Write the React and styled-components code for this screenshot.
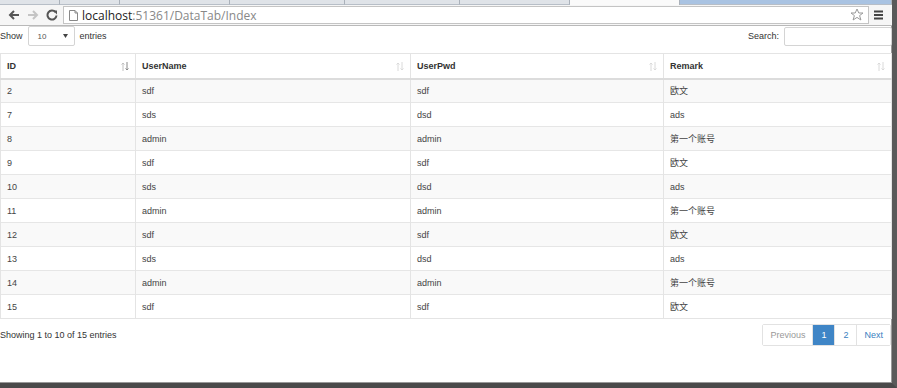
import React from "react";
import styled, { createGlobalStyle } from "styled-components";

const rows = [
  ["2", "sdf", "sdf", "欧文"],
  ["7", "sds", "dsd", "ads"],
  ["8", "admin", "admin", "第一个账号"],
  ["9", "sdf", "sdf", "欧文"],
  ["10", "sds", "dsd", "ads"],
  ["11", "admin", "admin", "第一个账号"],
  ["12", "sdf", "sdf", "欧文"],
  ["13", "sds", "dsd", "ads"],
  ["14", "admin", "admin", "第一个账号"],
  ["15", "sdf", "sdf", "欧文"],
];

const columns = [
  { title: "ID", width: 135, active: true },
  { title: "UserName", width: 275 },
  { title: "UserPwd", width: 253 },
  { title: "Remark", width: 228 },
];

const GlobalStyle = createGlobalStyle`
  html, body { margin: 0; padding: 0; background: #fff; }
  body {
    font-family: "Liberation Sans", Arial, "Noto Sans CJK SC", sans-serif;
    color: #333;
  }
  * { box-sizing: border-box; }
`;

const Frame = styled.div`
  width: 897px;
  height: 388px;
  display: flex;
  flex-direction: column;
  border-right: 5px solid #5a5a5a;
  border-bottom: 5px solid #4a4a4a;
  box-shadow: inset -1px -1px 0 #999;
  overflow: hidden;
`;

const TabStrip = styled.div`
  height: 5px;
  display: flex;
  background: #d3d8de;
`;

const Tab = styled.div`
  width: ${(p) => p.$w}px;
  background: ${(p) => (p.$active ? "#fafafa" : p.$blue ? "#a9c3e2" : "#dfe3e8")};
  border-right: 1px solid #aab1ba;
  border-bottom: ${(p) => (p.$active ? "none" : "1px solid #b7bec7")};
`;

const Toolbar = styled.div`
  height: 21px;
  display: flex;
  align-items: center;
  padding: 0 4px 0 4px;
  background: #f6f6f6;
  border-bottom: 1px solid #b9b9b9;
`;

const NavButton = styled.div`
  width: 19px;
  height: 19px;
  display: flex;
  align-items: center;
  justify-content: center;
  color: ${(p) => (p.$disabled ? "#c4c4c4" : "#555")};
`;

const UrlBox = styled.div`
  flex: 1;
  height: 18px;
  margin-left: 2px;
  display: flex;
  align-items: center;
  background: #fff;
  border: 1px solid #c4c4c4;
  padding: 0 4px 0 5px;
  font-family: "Open Sans", "DejaVu Sans", sans-serif;
  font-size: 12px;
`;

const Host = styled.span`
  color: #222;
  margin-left: 4px;
`;

const Path = styled.span`
  color: #888;
  flex: 1;
`;

const Page = styled.div`
  flex: 1;
  display: flex;
  flex-direction: column;
  font-size: 9px;
  color: #333;
`;

const TopBar = styled.div`
  height: 27px;
  display: flex;
  align-items: flex-start;
  justify-content: space-between;
`;

const Label = styled.label`
  display: flex;
  align-items: center;
  gap: 5px;
  height: 20px;
`;

const SelectBox = styled.div`
  width: 47px;
  height: 20px;
  border: 1px solid #d4d4d4;
  border-radius: 2px;
  display: flex;
  align-items: center;
  justify-content: space-between;
  padding: 0 6px 0 9px;
  font-size: 8px;
  color: #555;
`;

const SearchInput = styled.div`
  width: 108px;
  height: 19px;
  border: 1px solid #d4d4d4;
  border-radius: 2px;
`;

const Table = styled.table`
  width: 891px;
  border-collapse: collapse;
  table-layout: fixed;
  border: 1px solid #e4e4e4;
`;

const HeadCell = styled.th`
  height: 25px;
  text-align: left;
  font-weight: bold;
  padding: 0 6px;
  border-left: 1px solid #e4e4e4;
  border-bottom: 2px solid #dcdcdc;
  position: relative;
  color: #333;
`;

const SortIcon = styled.svg`
  position: absolute;
  right: 6px;
  top: 8px;
`;

const Row = styled.tr`
  background: ${(p) => (p.$odd ? "#f9f9f9" : "#fff")};
`;

const Cell = styled.td`
  height: 24px;
  padding: 0 6px;
  border-left: 1px solid #e4e4e4;
  border-top: 1px solid #e6e6e6;
  color: #444;
`;

const Footer = styled.div`
  display: flex;
  justify-content: space-between;
  align-items: center;
  margin-top: 5px;
  width: 891px;
`;

const Pager = styled.div`
  display: flex;
  height: 22px;
  border: 1px solid #e2e2e2;
  border-radius: 2px;
`;

const PageLink = styled.div`
  display: flex;
  align-items: center;
  justify-content: center;
  padding: 0 ${(p) => (p.$num ? 8 : 7)}px;
  min-width: 22px;
  border-left: ${(p) => (p.$first ? "none" : "1px solid #e2e2e2")};
  background: ${(p) => (p.$active ? "#3f85c6" : "#fff")};
  color: ${(p) => (p.$active ? "#fff" : p.$muted ? "#999" : "#3a80c0")};
  font-size: 9px;
`;

function SortArrows({ active }) {
  const up = active ? "#c0c0c0" : "#dadada";
  const down = active ? "#8a8a8a" : "#dadada";
  return (
    <SortIcon width="8" height="9" viewBox="0 0 8 9">
      <path d="M2 9V1M0.5 2.5L2 1L3.5 2.5" stroke={up} strokeWidth="1" fill="none" />
      <path d="M6 0V8M4.5 6.5L6 8L7.5 6.5" stroke={down} strokeWidth="1" fill="none" />
    </SortIcon>
  );
}

export default function App() {
  return (
    <>
      <GlobalStyle />
      <Frame>
        <TabStrip>
          <Tab $w={60} />
          <Tab $w={60} />
          <Tab $w={110} />
          <Tab $w={115} />
          <Tab $w={115} />
          <Tab $w={110} />
          <Tab $w={110} $active />
          <Tab $w={212} $blue />
        </TabStrip>
        <Toolbar>
          <NavButton>
            <svg width="12" height="12" viewBox="0 0 12 12">
              <path d="M11 6H2M6 2L2 6L6 10" stroke="currentColor" strokeWidth="2" fill="none" />
            </svg>
          </NavButton>
          <NavButton $disabled>
            <svg width="12" height="12" viewBox="0 0 12 12">
              <path d="M1 6H10M6 2L10 6L6 10" stroke="currentColor" strokeWidth="2" fill="none" />
            </svg>
          </NavButton>
          <NavButton>
            <svg width="12" height="12" viewBox="0 0 12 12">
              <path d="M9.5 3.2A4.5 4.5 0 1 0 10.5 6.5" stroke="currentColor" strokeWidth="2" fill="none" />
              <path d="M7 1.5L11 1.5L11 5.5Z" fill="currentColor" />
            </svg>
          </NavButton>
          <UrlBox>
            <svg width="9" height="11" viewBox="0 0 9 11">
              <path d="M0.5 0.5H6L8.5 3V10.5H0.5Z" stroke="#888" fill="#fff" />
              <path d="M6 0.5V3H8.5" stroke="#888" fill="none" />
            </svg>
            <Host>localhost</Host>
            <Path>:51361/DataTab/Index</Path>
            <svg width="14" height="14" viewBox="0 0 14 14">
              <path d="M7 1L8.8 5H13L9.6 7.6L10.9 12L7 9.4L3.1 12L4.4 7.6L1 5H5.2Z" stroke="#999" fill="none" />
            </svg>
          </UrlBox>
          <NavButton>
            <svg width="11" height="10" viewBox="0 0 11 10">
              <path d="M1 1.5H10M1 5H10M1 8.5H10" stroke="#444" strokeWidth="2" />
            </svg>
          </NavButton>
        </Toolbar>
        <Page>
          <TopBar>
            <Label>
              Show
              <SelectBox>
                10
                <svg width="5" height="4" viewBox="0 0 5 4">
                  <path d="M0 0H5L2.5 4Z" fill="#444" />
                </svg>
              </SelectBox>
              entries
            </Label>
            <Label>
              Search:
              <SearchInput />
            </Label>
          </TopBar>
          <Table>
            <colgroup>
              {columns.map((c) => (
                <col key={c.title} style={{ width: c.width }} />
              ))}
            </colgroup>
            <thead>
              <tr>
                {columns.map((c) => (
                  <HeadCell key={c.title}>
                    {c.title}
                    <SortArrows active={c.active} />
                  </HeadCell>
                ))}
              </tr>
            </thead>
            <tbody>
              {rows.map((r, i) => (
                <Row key={i} $odd={i % 2 === 0}>
                  {r.map((v, j) => (
                    <Cell key={j}>{v}</Cell>
                  ))}
                </Row>
              ))}
            </tbody>
          </Table>
          <Footer>
            <span>Showing 1 to 10 of 15 entries</span>
            <Pager>
              <PageLink $first $muted>Previous</PageLink>
              <PageLink $num $active>1</PageLink>
              <PageLink $num>2</PageLink>
              <PageLink>Next</PageLink>
            </Pager>
          </Footer>
        </Page>
      </Frame>
    </>
  );
}
